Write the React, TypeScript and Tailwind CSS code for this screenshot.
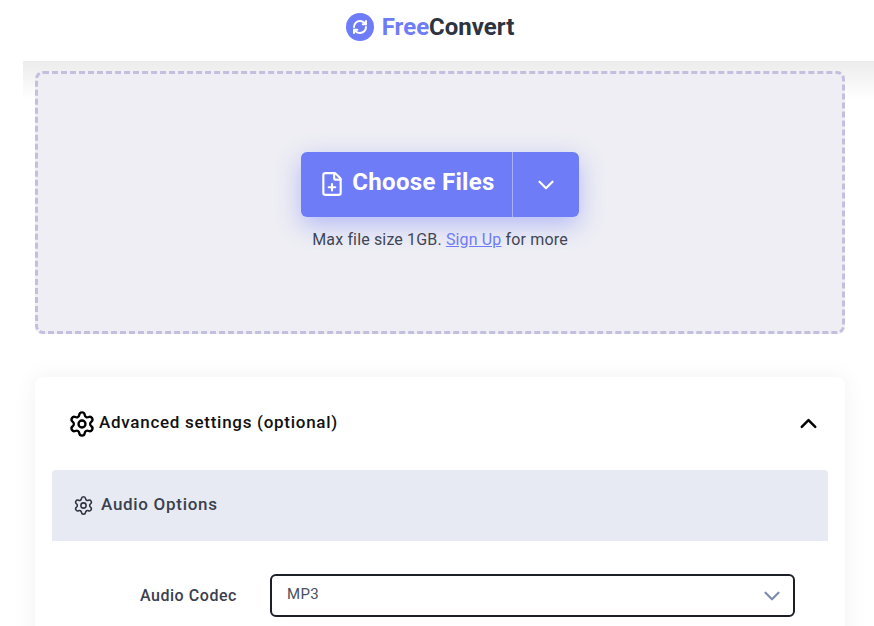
import { ChevronDown, ChevronUp, FilePlus, RefreshCw, Settings } from "lucide-react";

export default function App() {
  return (
    <div className="h-[626px] w-[874px] overflow-hidden bg-white font-['Roboto',sans-serif] text-[#2d3340]">
      <header className="flex h-[61px] items-center justify-center gap-2 pr-[14px] pb-[8px]">
        <div className="flex h-7 w-7 items-center justify-center rounded-full bg-[#6f7cf7]">
          <RefreshCw size={16} strokeWidth={3} className="text-white" />
        </div>
        <div className="text-[24px] font-bold">
          <span className="text-[#6f7cf7]">Free</span>
          <span>Convert</span>
        </div>
      </header>
      <main className="ml-[23px] h-[565px] bg-[linear-gradient(#ececec,#fff_38px)] pt-[10px] pl-[12px] pr-[29px]">
        <section className="flex h-[263px] flex-col items-center rounded-lg border-[3px] border-dashed border-[#c3c0df] bg-[#eeeef4] pt-[78px]">
          <div className="flex h-[65px] w-[278px] rounded-md bg-[#6f7cf7] text-white shadow-[0_8px_24px_rgba(111,124,247,0.45)]">
            <div className="flex w-[212px] items-center justify-center gap-[7px] border-r border-[#a9b2fa] pl-[1px]">
              <FilePlus size={26} strokeWidth={2} className="mb-[2px]" />
              <span className="pb-[5px] text-[24px] font-bold tracking-[0.3px]">Choose Files</span>
            </div>
            <div className="flex flex-1 items-center justify-center pr-[1px]">
              <ChevronDown size={26} strokeWidth={2} />
            </div>
          </div>
          <p className="mt-[13px] text-[16px] leading-5 tracking-[0.15px] text-[#3f4655]">
            Max file size 1GB. <a className="text-[#6f7cf7] underline">Sign Up</a> for more
          </p>
        </section>
        <section className="mt-[43px] h-[300px] rounded-lg bg-white px-[17px] shadow-[0_0_24px_rgba(0,0,0,0.06)]">
          <div className="flex h-[93px] items-center justify-between pl-[16px] pr-[6px]">
            <div className="flex items-center gap-[3px]">
              <Settings size={28} strokeWidth={2} className="text-black" />
              <span className="pb-[2px] text-[17px] font-medium tracking-[0.72px] text-[#111]">Advanced settings (optional)</span>
            </div>
            <ChevronUp size={27} strokeWidth={2.2} className="text-black" />
          </div>
          <div className="flex h-[71px] items-center gap-[7px] rounded-t bg-[#e7eaf2] pl-[21px]">
            <Settings size={21} strokeWidth={1.75} />
            <span className="pb-[2px] text-[17px] font-medium tracking-[0.7px] text-[#3a404d]">Audio Options</span>
          </div>
          <div className="mt-[33px] flex items-center pr-[33px]">
            <label className="w-[185px] text-right text-[16px] font-medium tracking-[0.55px] text-[#3a404d]">Audio Codec</label>
            <div className="ml-[33px] flex h-[43px] flex-1 items-center justify-between rounded-md border-2 border-[#1c1f26] pl-[15px] pr-[8px]">
              <span className="pb-[3px] text-[15px] tracking-[0.3px] text-[#4a5160]">MP3</span>
              <ChevronDown size={26} strokeWidth={2} className="text-[#7d8cb0]" />
            </div>
          </div>
        </section>
      </main>
    </div>
  );
}
